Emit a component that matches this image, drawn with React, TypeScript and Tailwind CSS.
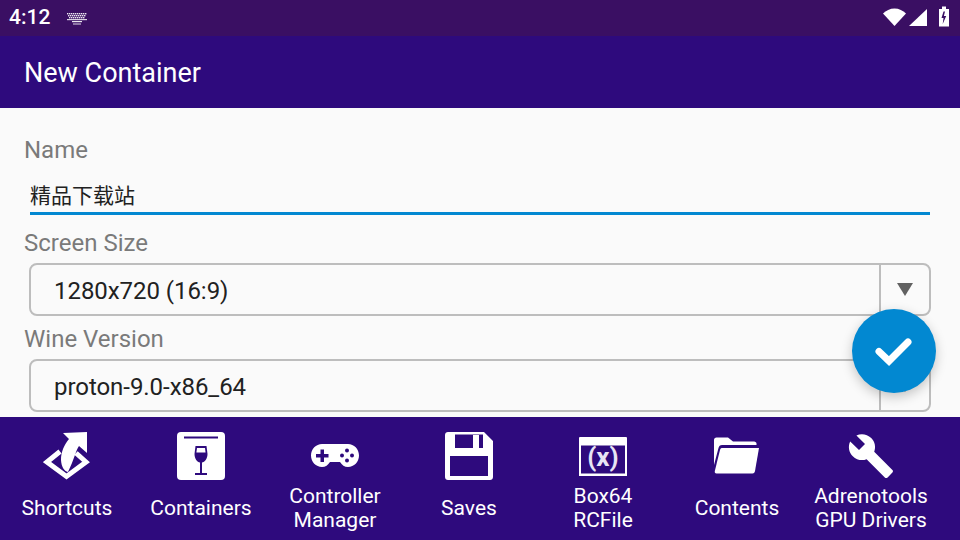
const font = "font-['Roboto','Noto_Sans_CJK_SC',sans-serif]";

function KeyboardIcon() {
  const rows = [
    { y: 0, xs: [0, 2, 4, 6, 8, 10, 12, 14, 16, 18] },
    { y: 2, xs: [1, 3, 5, 7, 9, 11, 13, 15, 17] },
    { y: 4, xs: [2, 4, 6, 8, 10, 12, 14, 16] },
  ];
  return (
    <svg width="20" height="12" viewBox="0 0 20 12" className="ml-[17px] mt-[1px]">
      {rows.map((r) =>
        r.xs.map((x) => (
          <rect key={`${r.y}-${x}`} x={x} y={r.y} width="1.4" height="1.4" fill="#fff" opacity="0.9" />
        ))
      )}
      <rect x="0" y="6" width="20" height="1.2" fill="#fff" opacity="0.8" />
      <rect x="5" y="8" width="10" height="1.2" fill="#fff" opacity="0.9" />
      <rect x="6" y="10.4" width="8" height="1.2" fill="#fff" opacity="0.7" />
    </svg>
  );
}

function StatusIcons() {
  return (
    <svg width="80" height="36" viewBox="0 0 80 36" className="absolute right-0 top-0">
      <path d="M3 13.500C6 10.500 10 8.500 14.500 8.500S23 10.500 26 13.500L14.500 26z" fill="#fff" />
      <path d="M47 9v17H29z" fill="#fff" />
      <path d="M59 9h3v-2.500h4V9h3v17.500H59z" fill="#fff" />
      <path d="M65 11.500h-1.500l-2 6.500h2l-.8 6 3.500-8h-2.300z" fill="#3a0f63" />
    </svg>
  );
}

function ShortcutsIcon() {
  return (
    <svg width="48" height="48" viewBox="0 0 48 48">
      <path d="M17 19.500 4 30 23.500 44.500 43 30 33 21" fill="none" stroke="#fff" strokeWidth="5" />
      <path d="M20 1 44 0V21L36 14C33 18 31 28 25 40 21 39 18.500 35 18 28 18 20 21 13 26 7z" fill="#fff" />
    </svg>
  );
}

function ContainersIcon() {
  return (
    <svg width="48" height="48" viewBox="0 0 48 48">
      <rect width="48" height="48" rx="4" fill="#fff" />
      <rect x="7" y="4.500" width="34" height="2" fill="#2e0a7d" />
      <path d="M18.500 14h11l1 8c0 5-2.800 8-5.500 8.500V41h5v2H18v-2h5V30.500C20.300 30 17.500 27 17.500 22z" fill="#2e0a7d" />
      <path d="M20 16h8l.6 4.500h-9.200z" fill="#fff" />
    </svg>
  );
}

function ControllerIcon() {
  return (
    <svg width="48" height="48" viewBox="0 0 48 48">
      <path d="M11 12h26c6 0 11 5 11 11.500S43 35 37 35c-3.500 0-6-2-8-5H19c-2 3-4.500 5-8 5C5 35 0 30 0 23.500S5 12 11 12z" fill="#fff" />
      <path d="M9.500 17.500h3.500v4.500h4.500v3.500H13v4.500H9.500v-4.500H5V22h4.500z" fill="#2e0a7d" />
      <circle cx="36" cy="18.500" r="2" fill="#2e0a7d" />
      <circle cx="36" cy="28.500" r="2" fill="#2e0a7d" />
      <circle cx="31" cy="23.500" r="2" fill="#2e0a7d" />
      <circle cx="41" cy="23.500" r="2" fill="#2e0a7d" />
    </svg>
  );
}

function SavesIcon() {
  return (
    <svg width="48" height="48" viewBox="0 0 48 48">
      <path
        fillRule="evenodd"
        d="M3 0h36l9 9v36c0 1.700-1.300 3-3 3H3c-1.700 0-3-1.300-3-3V3C0 1.300 1.300 0 3 0zM10 2.500V16h28V2.500zM5 24v20h38V24z"
        fill="#fff"
      />
      <rect x="28" y="3" width="6" height="13" fill="#fff" />
    </svg>
  );
}

function Box64Icon() {
  return (
    <svg width="48" height="48" viewBox="0 0 48 48">
      <path fillRule="evenodd" d="M1 5h46q1 0 1 1v38H0V6q0-1 1-1zM2 13.500V41.500h44V13.500z" fill="#fff" />
      <text x="24" y="34" textAnchor="middle" fontSize="26" fontWeight="700" fill="#e8e4f4" fontFamily="Roboto, sans-serif">
        (x)
      </text>
    </svg>
  );
}

function FolderIcon() {
  return (
    <svg width="48" height="48" viewBox="0 0 48 48">
      <path d="M1 8c0-1.500 1-2.500 2.500-2.500H15l5 4h21c1.500 0 2.500 1 2.500 2v1.500H9c-2 0-3 1-3.500 3L1 33z" fill="#fff" />
      <path d="M9.500 16H46l-4 23c-.3 1.500-1 2.500-2.500 2.500H3.500c-1.500 0-2-1-1.700-2.500l5.200-21c.4-1.500 1-2 2.500-2z" fill="#fff" />
    </svg>
  );
}

function WrenchIcon() {
  return (
    <svg width="48" height="48" viewBox="0 0 24 24">
      <path
        d="M22.700 19l-9.100-9.100c.9-2.300.4-5-1.500-6.900-2-2-5-2.400-7.400-1.300L9 6 6 9 1.600 4.700C.4 7.100.9 10.100 2.900 12.100c1.900 1.900 4.600 2.400 6.900 1.500l9.100 9.100c.4.400 1 .4 1.400 0l2.300-2.300c.5-.4.500-1.100.1-1.400z"
        fill="#fff"
      />
    </svg>
  );
}

function Spinner({ value }: { value: string }) {
  return (
    <div className="mx-[5px] mt-[6px] flex h-[53px] items-stretch rounded-[8px] border-2 border-[#bdbdbd]">
      <div className="flex flex-1 items-center pl-[23px] pt-[2px] text-[24px] tracking-[-0.05px] text-[#212121]">{value}</div>
      <div className="flex w-[50px] items-center justify-center border-l-2 border-[#bdbdbd]">
        <div className="h-0 w-0 border-x-[8.5px] border-t-[13px] border-x-transparent border-t-[#616161]" />
      </div>
    </div>
  );
}

const navItems = [
  { label: ["Shortcuts"], icon: <ShortcutsIcon /> },
  { label: ["Containers"], icon: <ContainersIcon /> },
  { label: ["Controller", "Manager"], icon: <ControllerIcon /> },
  { label: ["Saves"], icon: <SavesIcon /> },
  { label: ["Box64", "RCFile"], icon: <Box64Icon /> },
  { label: ["Contents"], icon: <FolderIcon /> },
  { label: ["Adrenotools", "GPU Drivers"], icon: <WrenchIcon /> },
];

export default function App() {
  return (
    <div className={`relative flex h-[540px] w-[960px] flex-col overflow-hidden bg-[#fafafa] ${font}`}>
      <div className="relative flex h-[36px] shrink-0 items-center bg-[#3a0f63] pl-[9px] text-[21px] font-medium text-white">
        <span>4:12</span>
        <KeyboardIcon />
        <StatusIcons />
      </div>
      <div className="flex h-[72px] shrink-0 items-center bg-[#2e0a7d] pl-[24px] pt-[3px] text-[27px] text-white">
        New Container
      </div>

      <div className="flex-1 overflow-hidden px-[24px] pt-[28px]">
        <div className="h-[28px] text-[24px] leading-[28px] text-[#7a7a7a]">Name</div>
        <div className="mx-[6px] flex h-[51px] items-center border-b-[3px] border-[#0288d1] pt-[17px] text-[21px] text-[#212121]">
          精品下载站
        </div>
        <div className="mt-[14px] h-[28px] text-[24px] leading-[28px] text-[#7a7a7a]">Screen Size</div>
        <Spinner value="1280x720 (16:9)" />
        <div className="mt-[9px] h-[28px] text-[24px] leading-[28px] text-[#7a7a7a]">Wine Version</div>
        <Spinner value="proton-9.0-x86_64" />
      </div>

      <div className="flex h-[123px] shrink-0 bg-[#2e0a7d] pt-[15px] text-white">
        {navItems.map((item) => (
          <div key={item.label[0]} className="flex w-[134px] flex-col items-center">
            <div className="h-[48px] w-[48px]">{item.icon}</div>
            <div
              className={`whitespace-nowrap text-center text-[21px] leading-[24px] ${
                item.label.length === 1 ? "mt-[16px]" : "mt-[4px]"
              }`}
            >
              {item.label.map((l) => (
                <div key={l}>{l}</div>
              ))}
            </div>
          </div>
        ))}
      </div>

      <div className="absolute left-[852px] top-[309px] flex h-[84px] w-[84px] items-center justify-center rounded-full bg-[#0288d1] shadow-[0_4px_12px_rgba(0,0,0,0.22)]">
        <svg width="40" height="32" viewBox="0 0 40 32">
          <path d="M5 16.500 15 26 34 7" fill="none" stroke="#fff" strokeWidth="7" strokeLinecap="round" strokeLinejoin="miter" />
        </svg>
      </div>
    </div>
  );
}
